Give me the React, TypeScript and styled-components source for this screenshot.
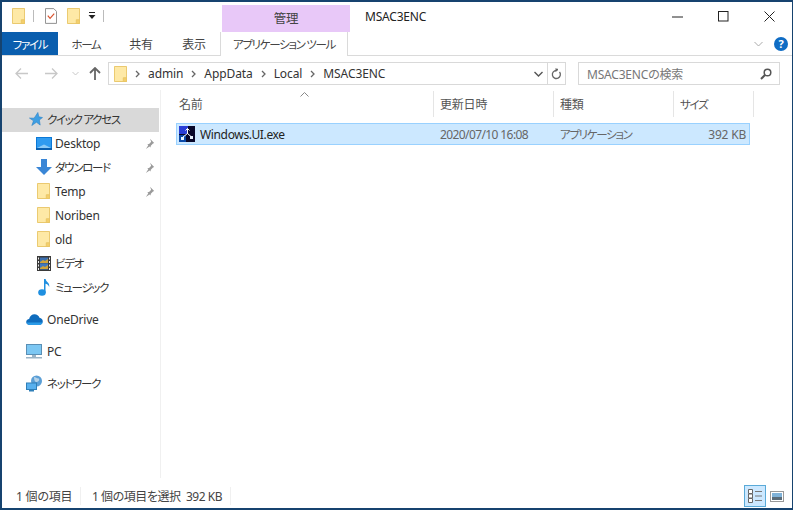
import { ReactNode } from 'react';
import styled, { createGlobalStyle } from 'styled-components';

const GlobalStyle = createGlobalStyle`
  html, body {
    margin: 0;
    padding: 0;
    background: #fff;
  }
  body {
    font-family: 'Noto Sans', 'Noto Sans CJK JP', sans-serif;
    font-size: 12px;
    letter-spacing: -0.2px;
    font-feature-settings: 'palt';
    color: #333;
    white-space: nowrap;
  }
  * {
    box-sizing: border-box;
  }
`;

// katakana in the reference is much narrower than in the CJK font we have
const Kana = styled.span`
  font-size: 11.5px;
  letter-spacing: -1.3px;
`;

const Folder = ({ w = 13, h = 16 }: { w?: number; h?: number }) => (
  <svg width={w} height={h} viewBox='0 0 14 17' preserveAspectRatio='none'>
    <path d='M.5.5h13v16H.5z' fill='#fee9a6' stroke='#e8c566' />
    <path d='M10 16.500v-4h3.500v4z' fill='#f4cf6b' stroke='#e8c566' />
  </svg>
);

const Pin = () => (
  <svg width={11} height={11} viewBox='0 0 11 11'>
    <path d='M6 .8l4.200 4.200-1.200.6-2.200 2.100-.3 1.800-1-1-3.600 2.400 2.400-3.600-1-1 1.800-.3 2.100-2.200z' fill='#9a9a9a' />
  </svg>
);

const Star = () => (
  <svg width={14} height={14} viewBox='0 0 15 15'>
    <path d='M9.500.5l1 4.600 4 .9-3.400 2.500.9 5.500-4-3-5 3.500 1.800-5L.5 6.500l5 .1z' fill='#3f9fe3' stroke='#2a80c4' strokeWidth='.6' />
  </svg>
);

const Desktop = () => (
  <svg width={16} height={13} viewBox='0 0 16 13'>
    <rect width='16' height='13' fill='#0b78d6' />
    <rect x='1' y='1' width='14' height='10' fill='#2f9bf0' />
    <path d='M1 11l7-3.500 7 3.500z' fill='#8ccbf7' />
    <rect y='11' width='16' height='2' fill='#0a5fae' />
  </svg>
);

const Download = () => (
  <svg width={16} height={16} viewBox='0 0 16 16'>
    <path d='M5 0h6v8h5l-8 8-8-8h5z' fill='#3a86d6' />
  </svg>
);

const Video = () => (
  <svg width={14} height={15} viewBox='0 0 14 15'>
    <rect width='14' height='15' fill='#3a3a3a' />
    <rect x='3' y='1.500' width='8' height='6' fill='#3b6fb0' />
    <rect x='3' y='7.500' width='8' height='6' fill='#3f78c0' />
    <path d='M3 6l3-2 2 1 3-2v4H3zM3 12l3-2 2 1 3-2v4H3z' fill='#d0a43a' />
    <path d='M1 1.500h1v2H1zM1 5h1v2H1zM1 8.500h1v2H1zM1 12h1v2H1zM12 1.500h1v2h-1zM12 5h1v2h-1zM12 8.500h1v2h-1zM12 12h1v2h-1z' fill='#eee' />
  </svg>
);

const Music = () => (
  <svg width={12} height={18} viewBox='0 0 12 18'>
    <ellipse cx='4' cy='14.500' rx='3.800' ry='3.200' fill='#1f8fe0' />
    <path d='M6 1h1.600c.4 3 4.400 3.500 3.600 8-.8-2.300-2.500-3-3.700-3.200V15H6z' fill='#1f8fe0' />
  </svg>
);

const Cloud = () => (
  <svg width={17} height={11} viewBox='0 0 17 11'>
    <path d='M4 11C1.800 11 .2 9.700.2 8c0-1.600 1.300-2.800 2.900-2.900C3.800 2 6 .3 8.500.3c2.300 0 4.300 1.400 5 3.400 1.900.2 3.300 1.700 3.300 3.600 0 2.100-1.700 3.700-3.800 3.700z' fill='#0f6cbd' />
    <path d='M4 11C2.500 11 .9 10 .4 8.500h16.300c-.4 1.500-1.900 2.500-3.700 2.500z' fill='#2a9be8' />
  </svg>
);

const Monitor = () => (
  <svg width={16} height={15} viewBox='0 0 16 15'>
    <rect x='.5' y='.5' width='15' height='10' fill='#7cc7f3' stroke='#5a8fb5' />
    <rect x='6' y='11' width='4' height='2' fill='#9bb4c6' />
    <rect y='13' width='16' height='1.500' fill='#9bb4c6' />
  </svg>
);

const Network = () => (
  <svg width={17} height={17} viewBox='0 0 17 17'>
    <circle cx='10.500' cy='6' r='5.500' fill='#5b9fd6' />
    <path d='M8 2c2 0 3 2 5 1.500.8 2-.6 3-2 3.500-2 .7-3-2-3-5z' fill='#b5d2e8' />
    <rect x='.5' y='8' width='10' height='6.500' fill='#58b0ee' stroke='#2f7fb8' />
    <rect x='3' y='15' width='5' height='1.500' fill='#2f7fb8' />
  </svg>
);

const ExeIcon = () => (
  <svg width={16} height={16} viewBox='0 0 16 16'>
    <rect width='16' height='16' fill='#08082a' />
    <rect width='9' height='8' fill='#2a3fd6' />
    <rect y='9' width='7' height='7' fill='#0b4aa8' />
    <path d='M8.500 8V2.500M6.500 4.500l2-2 2 2M8.500 7.500L4 11M8.500 7.500l3.500 3' fill='none' stroke='#fff' />
    <path d='M2 11h3v3H2zM11 10h3v3h-3z' fill='#e8f4ff' />
  </svg>
);

const Window = styled.div`
  width: 793px;
  height: 510px;
  display: flex;
  flex-direction: column;
  border: solid #16436f;
  border-width: 2px 1px 2px 2px;
  background: #fff;
  overflow: hidden;
`;

const TitleBar = styled.div`
  height: 30px;
  display: flex;
`;

const QuickBar = styled.div`
  width: 220px;
  display: flex;
  align-items: center;
  padding: 0 0 2px 10px;
`;

const Divider = styled.span<{ $left: number; $right: number }>`
  width: 1px;
  height: 12px;
  background: #bbb;
  margin: 0 ${p => p.$right}px 0 ${p => p.$left}px;
`;

const Spacer = styled.span<{ $width: number }>`
  width: ${p => p.$width}px;
`;

const ContextHeader = styled.div`
  width: 128px;
  margin-top: 3px;
  background: #e8c8f8;
  display: flex;
  align-items: center;
  justify-content: center;
  font-size: 12.5px;
  padding-bottom: 2px;
  color: #444;
`;

const Title = styled.div`
  padding: 8px 0 0 15px;
  color: #222;
  line-height: 14px;
`;

const WinControls = styled.div`
  margin-left: auto;
  display: flex;
  align-items: flex-start;
`;

const WinButton = styled.div`
  width: 46px;
  height: 28px;
  display: flex;
  align-items: center;
  justify-content: center;
`;

const Ribbon = styled.div`
  height: 24px;
  display: flex;
  border-bottom: 1px solid #dadada;
`;

const FileTab = styled.div`
  width: 56px;
  height: 23px;
  background: #0a5eae;
  color: #fff;
  display: flex;
  align-items: center;
  justify-content: center;
`;

const RibbonTab = styled.div<{ $width: number }>`
  width: ${p => p.$width}px;
  height: 23px;
  display: flex;
  align-items: center;
  justify-content: center;
  color: #444;
`;

const ContextTab = styled(RibbonTab)`
  height: 24px;
  border: solid #dadada;
  border-width: 0 1px;
  background: #fff;
  position: relative;
  z-index: 1;
`;

const RibbonEnd = styled.div`
  margin-left: auto;
  display: flex;
  align-items: center;
  gap: 11px;
  padding-right: 4px;
`;

const HelpBadge = styled.div`
  width: 14px;
  height: 14px;
  border-radius: 50%;
  background: #0f6cc4;
  color: #fff;
  font-size: 11px;
  font-weight: 700;
  line-height: 14px;
  text-align: center;
`;

const AddressRow = styled.div`
  height: 34px;
  display: flex;
  align-items: center;
  padding: 1px 11px 0 0;
`;

const NavButtons = styled.div`
  width: 106px;
  display: flex;
  align-items: center;
  padding-left: 5px;
`;

const NavSlot = styled.span<{ $width: number }>`
  width: ${p => p.$width}px;
  display: flex;
  align-items: center;
  justify-content: center;
`;

const AddressBox = styled.div`
  width: 458px;
  height: 23px;
  border: 1px solid #d9d9d9;
  display: flex;
  align-items: center;
  padding-left: 5px;
`;

const Crumb = styled.span`
  color: #333;
  margin-left: 8px;
  letter-spacing: -0.1px;
`;

const Chevron = () => (
  <svg width={5} height={8} viewBox='0 0 5 8' style={{ marginLeft: 8 }}>
    <path d='M1 1l3 3-3 3' fill='none' stroke='#666' strokeWidth='1.300' />
  </svg>
);

const AddressTools = styled.div`
  margin-left: auto;
  height: 100%;
  display: flex;
  align-items: center;
`;

const DropSlot = styled.div`
  width: 18px;
  height: 100%;
  display: flex;
  align-items: center;
  justify-content: center;
`;

const RefreshSlot = styled(DropSlot)`
  border-left: 1px solid #d9d9d9;
`;

const SearchBox = styled.div`
  width: 202px;
  height: 23px;
  margin-left: 12px;
  border: 1px solid #d9d9d9;
  display: flex;
  align-items: center;
  justify-content: space-between;
  padding: 0 7px 0 8px;
  color: #777;
`;

const Main = styled.div`
  flex: 1;
  min-height: 0;
  display: flex;
`;

const Sidebar = styled.nav`
  width: 159px;
  border-right: 1px solid #f0f0f0;
  padding-top: 18px;
`;

const NavRow = styled.div<{ $indent: number; $active?: boolean; $gap?: number }>`
  height: 24px;
  margin-top: ${p => p.$gap || 0}px;
  width: 157px;
  display: flex;
  align-items: center;
  padding: 0 4px 2px ${p => p.$indent}px;
  background: ${p => (p.$active ? '#d9d9d9' : 'transparent')};
  color: #333;
`;

const NavIcon = styled.span<{ $width: number; $start?: boolean }>`
  width: ${p => p.$width}px;
  flex: none;
  display: flex;
  align-items: center;
  justify-content: ${p => (p.$start ? 'flex-start' : 'center')};
`;

const PinSlot = styled.span`
  margin-left: auto;
  display: flex;
`;

const Content = styled.div`
  flex: 1;
  min-width: 0;
  position: relative;
`;

const SortArrow = styled.svg`
  position: absolute;
  left: 139px;
  top: 2px;
`;

const HeaderRow = styled.div`
  height: 30px;
  padding-top: 1px;
  display: grid;
  grid-template-columns: 273px 120px 120px 80px;
`;

const HeaderCell = styled.div<{ $first?: boolean }>`
  border-right: 1px solid #e5e5e5;
  padding-left: ${p => (p.$first ? 18 : 6)}px;
  display: flex;
  align-items: center;
  height: 26px;
  color: #555;
`;

const FileRow = styled.div`
  width: 574px;
  height: 22px;
  margin: 3px 0 0 15px;
  background: #cce8ff;
  border: 1px solid #99d1ff;
  display: grid;
  grid-template-columns: 263px 120px 120px 66px;
  align-items: center;
`;

const NameCell = styled.div`
  display: flex;
  align-items: center;
  gap: 5px;
  padding-left: 2px;
  color: #222;
  letter-spacing: -0.35px;
`;

const MetaCell = styled.div<{ $right?: boolean; $tight?: boolean }>`
  color: #666;
  text-align: ${p => (p.$right ? 'right' : 'left')};
  letter-spacing: ${p => (p.$tight ? '-0.6px' : 'inherit')};
`;

const StatusBar = styled.div`
  height: 30px;
  display: flex;
  align-items: center;
  padding: 6px 0 0 14px;
  color: #444;
`;

const StatusCount = styled.span`
  width: 65px;
  margin-right: 11px;
  border-right: 1px solid #f0f0f0;
`;

const StatusSelection = styled.span`
  width: 139px;
  border-right: 1px solid #f0f0f0;
  letter-spacing: -0.45px;
`;

const ViewSwitch = styled.div`
  margin-left: auto;
  display: flex;
  align-items: center;
  padding-right: 4px;
`;

const ViewButton = styled.div<{ $active?: boolean }>`
  width: 22px;
  height: 22px;
  display: flex;
  align-items: center;
  justify-content: center;
  background: ${p => (p.$active ? '#cce8ff' : 'transparent')};
  border: 1px solid ${p => (p.$active ? '#5aaad8' : 'transparent')};
`;

type Place = { id: string; label: ReactNode; icon: ReactNode; pinned?: boolean };

const places: Place[] = [
  { id: 'desktop', label: 'Desktop', icon: <Desktop />, pinned: true },
  { id: 'download', label: <Kana>ダウンロード</Kana>, icon: <Download />, pinned: true },
  { id: 'temp', label: 'Temp', icon: <Folder />, pinned: true },
  { id: 'noriben', label: 'Noriben', icon: <Folder /> },
  { id: 'old', label: 'old', icon: <Folder /> },
  { id: 'video', label: <Kana>ビデオ</Kana>, icon: <Video /> },
  { id: 'music', label: <Kana>ミュージック</Kana>, icon: <Music /> },
];

const App = () => {
  return (
    <>
      <GlobalStyle />
      <Window>
        <TitleBar>
          <QuickBar>
            <Folder />
            <Divider $left={8} $right={11} />
            <svg width={12} height={16} viewBox='0 0 13 17'>
              <path d='M.5.5h9l3 3v13H.5z' fill='#fff' stroke='#888' />
              <path d='M3 8l2.500 3L10 6' fill='none' stroke='#d9512c' strokeWidth='1.300' />
            </svg>
            <Spacer $width={10} />
            <Folder />
            <Spacer $width={8} />
            <svg width={8} height={8} viewBox='0 0 8 8'>
              <path d='M1 0h6v1H1zM.5 3h7L4 7z' fill='#222' />
            </svg>
            <Divider $left={7} $right={0} />
          </QuickBar>
          <ContextHeader>管理</ContextHeader>
          <Title>MSAC3ENC</Title>
          <WinControls>
            <WinButton>
              <svg width={11} height={11} viewBox='0 0 11 11'>
                <path d='M0 6h11' stroke='#222' strokeWidth='1' />
              </svg>
            </WinButton>
            <WinButton>
              <svg width={11} height={11} viewBox='0 0 11 11'>
                <rect x='.5' y='.5' width='9.500' height='9.500' fill='none' stroke='#222' />
              </svg>
            </WinButton>
            <WinButton>
              <svg width={11} height={11} viewBox='0 0 11 11'>
                <path d='M.5.5l10 10M10.500.5l-10 10' stroke='#222' />
              </svg>
            </WinButton>
          </WinControls>
        </TitleBar>
        <Ribbon>
          <FileTab><Kana>ファイル</Kana></FileTab>
          <RibbonTab $width={56}><Kana>ホーム</Kana></RibbonTab>
          <RibbonTab $width={54}>共有</RibbonTab>
          <RibbonTab $width={52}>表示</RibbonTab>
          <ContextTab $width={128}><Kana>アプリケーション ツール</Kana></ContextTab>
          <RibbonEnd>
            <svg width={9} height={6} viewBox='0 0 9 6'>
              <path d='M.5 1l4 4 4-4' fill='none' stroke='#aaa' />
            </svg>
            <HelpBadge>?</HelpBadge>
          </RibbonEnd>
        </Ribbon>
        <AddressRow>
          <NavButtons>
            <NavSlot $width={28}>
              <svg width={13} height={11} viewBox='0 0 13 11'>
                <path d='M6 .5l-5 5 5 5M1 5.500h12' fill='none' stroke='#c8c8c8' strokeWidth='1.300' />
              </svg>
            </NavSlot>
            <NavSlot $width={32}>
              <svg width={13} height={11} viewBox='0 0 13 11'>
                <path d='M7 .5l5 5-5 5M12 5.500H0' fill='none' stroke='#c8c8c8' strokeWidth='1.300' />
              </svg>
            </NavSlot>
            <NavSlot $width={16}>
              <svg width={7} height={5} viewBox='0 0 7 5'>
                <path d='M.5 1l3 3 3-3' fill='none' stroke='#c8c8c8' />
              </svg>
            </NavSlot>
            <NavSlot $width={24}>
              <svg width={12} height={13} viewBox='0 0 12 13'>
                <path d='M1 6l5-5 5 5M6 1v12' fill='none' stroke='#666' strokeWidth='1.800' />
              </svg>
            </NavSlot>
          </NavButtons>
          <AddressBox>
            <Folder />
            <Chevron />
            <Crumb>admin</Crumb>
            <Chevron />
            <Crumb>AppData</Crumb>
            <Chevron />
            <Crumb>Local</Crumb>
            <Chevron />
            <Crumb>MSAC3ENC</Crumb>
            <AddressTools>
              <DropSlot>
                <svg width={9} height={6} viewBox='0 0 9 6'>
                  <path d='M.5 1l4 4 4-4' fill='none' stroke='#555' strokeWidth='1.400' />
                </svg>
              </DropSlot>
              <RefreshSlot>
                <svg width={11} height={12} viewBox='0 0 11 12'>
                  <path d='M5 1.500h2M8.500 4a4 4 0 1 1-3-1.500' fill='none' stroke='#666' strokeWidth='1.300' />
                  <path d='M4.500 0v4L7 2z' fill='#666' />
                </svg>
              </RefreshSlot>
            </AddressTools>
          </AddressBox>
          <SearchBox>
            <span>MSAC3ENCの検索</span>
            <svg width={12} height={12} viewBox='0 0 12 12'>
              <circle cx='7.500' cy='4.500' r='3.300' fill='none' stroke='#555' strokeWidth='1.500' />
              <path d='M5 7l-4 4' stroke='#555' strokeWidth='2' />
            </svg>
          </SearchBox>
        </AddressRow>
        <Main>
          <Sidebar>
            <NavRow $indent={27} $active>
              <NavIcon $width={18} $start>
                <Star />
              </NavIcon>
              <Kana>クイック アクセス</Kana>
            </NavRow>
            {places.map(place => (
              <NavRow key={place.id} $indent={30}>
                <NavIcon $width={23}>{place.icon}</NavIcon>
                {place.label}
                {place.pinned && (
                  <PinSlot>
                    <Pin />
                  </PinSlot>
                )}
              </NavRow>
            ))}
            <NavRow $indent={24} $gap={8}>
              <NavIcon $width={21} $start>
                <Cloud />
              </NavIcon>
              OneDrive
            </NavRow>
            <NavRow $indent={24} $gap={8}>
              <NavIcon $width={21} $start>
                <Monitor />
              </NavIcon>
              PC
            </NavRow>
            <NavRow $indent={24} $gap={8}>
              <NavIcon $width={21} $start>
                <Network />
              </NavIcon>
              <Kana>ネットワーク</Kana>
            </NavRow>
          </Sidebar>
          <Content>
            <SortArrow width={9} height={5} viewBox='0 0 9 5'>
              <path d='M.5 4.500l4-4 4 4' fill='none' stroke='#888' />
            </SortArrow>
            <HeaderRow>
              <HeaderCell $first>名前</HeaderCell>
              <HeaderCell>更新日時</HeaderCell>
              <HeaderCell>種類</HeaderCell>
              <HeaderCell><Kana>サイズ</Kana></HeaderCell>
            </HeaderRow>
            <FileRow>
              <NameCell>
                <ExeIcon />
                Windows.UI.exe
              </NameCell>
              <MetaCell $tight>2020/07/10 16:08</MetaCell>
              <MetaCell><Kana>アプリケーション</Kana></MetaCell>
              <MetaCell $right>392 KB</MetaCell>
            </FileRow>
          </Content>
        </Main>
        <StatusBar>
          <StatusCount>1 個の項目</StatusCount>
          <StatusSelection>1 個の項目を選択&nbsp;&nbsp;392 KB</StatusSelection>
          <ViewSwitch>
            <ViewButton $active>
              <svg width={16} height={16} viewBox='0 0 16 16'>
                <path d='M1.500 1.500h4v4h-4zM1.500 6h4v4h-4zM1.500 10.500h4v4h-4z' fill='#fff' stroke='#666' />
                <path d='M8 3.500h7M8 8h7M8 12.500h7' stroke='#777' />
              </svg>
            </ViewButton>
            <ViewButton>
              <svg width={14} height={11} viewBox='0 0 14 11'>
                <rect x='.5' y='.5' width='13' height='10' fill='#fff' stroke='#999' />
                <rect x='2' y='2' width='10' height='4' fill='#7fb2d8' />
                <rect x='2' y='6' width='10' height='3' fill='#5a6b78' />
              </svg>
            </ViewButton>
          </ViewSwitch>
        </StatusBar>
      </Window>
    </>
  );
};

export default App;
